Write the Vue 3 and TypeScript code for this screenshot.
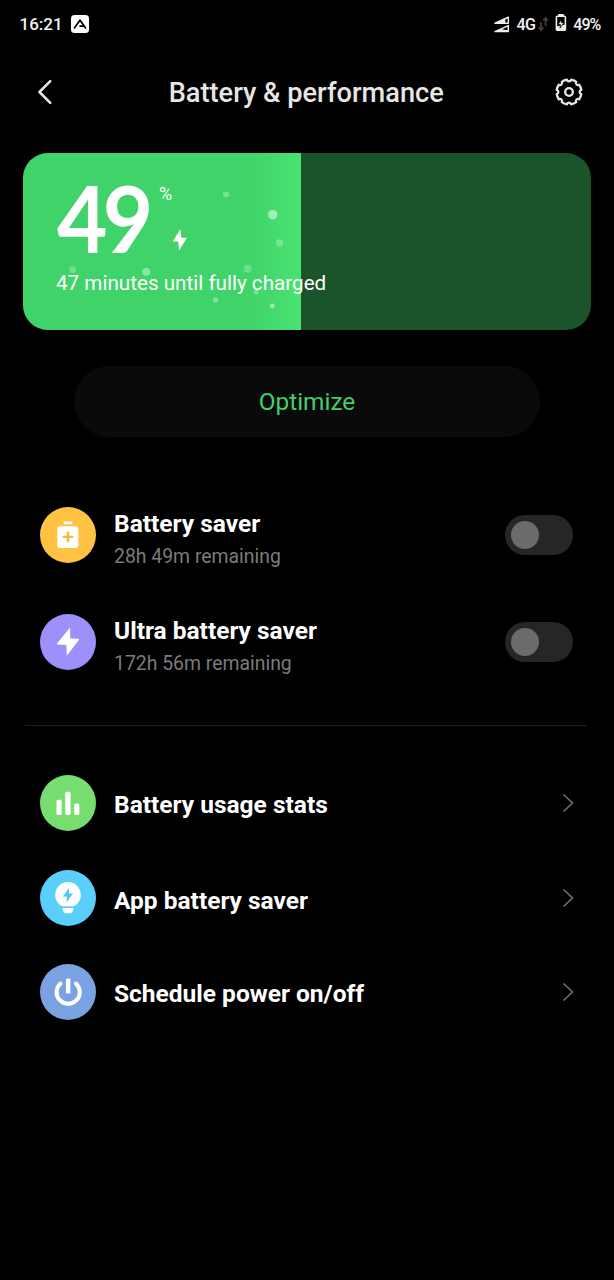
<script setup lang="ts">
interface SaverRow {
  id: 'saver' | 'ultra'
  title: string
  detail: string
}
interface LinkRow {
  id: 'stats' | 'app' | 'power'
  title: string
}

const level = 49

const savers: SaverRow[] = [
  { id: 'saver', title: 'Battery saver', detail: '28h 49m remaining' },
  { id: 'ultra', title: 'Ultra battery saver', detail: '172h 56m remaining' },
]

const links: LinkRow[] = [
  { id: 'stats', title: 'Battery usage stats' },
  { id: 'app', title: 'App battery saver' },
  { id: 'power', title: 'Schedule power on/off' },
]

// cx, cy, radius, opacity
const bubbles: [number, number, number, number][] = [
  [59.5, 45, 3, 0.25],
  [203, 41.5, 3, 0.3],
  [249.7, 61.7, 4.8, 0.5],
  [256.5, 90, 3.7, 0.28],
  [49.5, 116.5, 3.5, 0.25],
  [123.3, 118.7, 4, 0.38],
  [224.7, 115.7, 3.9, 0.25],
  [192.5, 147, 2.7, 0.35],
  [233, 139, 2.5, 0.3],
  [249.3, 153, 2.4, 0.5],
]

// Eight-lobed gear: outer arcs joined by small inward notches
function gearPath(): string {
  const R = 12.5
  const half = (9.5 * Math.PI) / 180
  const pt = (a: number) => `${(15 + R * Math.cos(a)).toFixed(2)} ${(15 + R * Math.sin(a)).toFixed(2)}`
  let d = ''
  for (let i = 0; i < 8; i++) {
    const a = (i * Math.PI) / 4
    d += i === 0 ? `M${pt(a - half)}` : `A${R} ${R} 0 0 1 ${pt(a - half)}`
    d += `A2.1 2.1 0 0 0 ${pt(a + half)}`
  }
  return d + `A${R} ${R} 0 0 1 ${pt(-half)}Z`
}
const gear = gearPath()
</script>

<template>
  <div class="screen">
    <div class="status">
      <span class="clock">16:21</span>
      <svg class="badge" width="18" height="18" viewBox="0 0 18 18">
        <rect width="18" height="18" rx="3.5" fill="#fff" />
        <path d="M3 13.6 9 5.2l6 8.4M8.4 11.200h4.600" fill="none" stroke="#000" stroke-width="1.700" />
      </svg>
      <span class="grow"></span>
      <svg class="signal" width="16" height="17" viewBox="0 0 16 17">
        <path d="M1 7.200 14.300 1.200v6zM1 15.600 14.300 9.600v6z" fill="none" stroke="#eee" stroke-width="1.500" stroke-linejoin="round" />
        <path d="M1 7.200 11.300 2.600v4.600zM1 15.600l6-2.700 7.300 1.600v1.100z" fill="#eee" />
      </svg>
      <span class="net">4G</span>
      <svg class="arrows" width="11" height="16" viewBox="0 0 11 16">
        <path d="M3 6v8M.6 11.300 3 14l2.400-2.700M7.600 10V2M5.200 4.700 7.600 2 10 4.700" fill="none" stroke="#3c3c3c" stroke-width="1.900" />
      </svg>
      <svg class="cell" width="12" height="18" viewBox="0 0 12 18">
        <rect x="3.200" width="5.600" height="2.500" fill="#eee" />
        <rect x="1.400" y="2.300" width="9" height="14" rx="1" fill="none" stroke="#eee" stroke-width="1.600" />
        <path d="M1.400 12.500 10.400 10.500v5.800h-9z" fill="#eee" />
        <path d="M6.800 5 3 10.400h2.500L5 14.200l4-5.500H6.400z" fill="#fff" stroke="#000" stroke-width=".8" />
      </svg>
      <span class="pct">49%</span>
    </div>

    <header class="header">
      <svg class="back" width="16" height="26" viewBox="0 0 16 26">
        <path d="M13.300 2.200 2.400 13l10.900 10.800" fill="none" stroke="#e6e6e6" stroke-width="2.500" stroke-linecap="round" stroke-linejoin="round" />
      </svg>
      <h1>Battery &amp; performance</h1>
      <svg class="gear" width="30" height="30" viewBox="0 0 30 30" fill="none" stroke="#e6e6e6">
        <path :d="gear" stroke-width="2.300" stroke-linejoin="round" />
        <circle cx="15" cy="15" r="3.800" stroke-width="2.300" />
      </svg>
    </header>

    <section class="card">
      <div class="fill" :style="{ width: level + '%' }"></div>
      <svg class="bubbles" width="278" height="177" viewBox="0 0 278 177">
        <circle v-for="(b, i) in bubbles" :key="i" :cx="b[0]" :cy="b[1]" :r="b[2]" :fill-opacity="b[3]" fill="#fff" />
      </svg>
      <div class="info">
        <div class="level">
          <span class="number">{{ level }}</span>
          <div class="unit">
            <span>%</span>
            <svg width="16" height="22" viewBox="0 0 16 22">
              <path d="M8.200.3.8 12.600h5.500L7 21.600l8-12.900H9.400z" fill="#fff" />
            </svg>
          </div>
        </div>
        <div class="eta">47 minutes until fully charged</div>
      </div>
    </section>

    <button class="optimize">Optimize</button>

    <div class="savers">
      <div v-for="row in savers" :key="row.id" class="row">
        <svg class="icon" width="56" height="56" viewBox="0 0 56 56">
          <template v-if="row.id === 'saver'">
            <circle cx="28" cy="28" r="28" fill="#ffc242" />
            <rect x="23.600" y="14.600" width="8.800" height="2.600" rx=".8" fill="#fff" />
            <rect x="17.300" y="19.300" width="21" height="21.700" rx="2.500" fill="#fff" />
            <path d="M28 24.500v10.800M22.600 29.900h10.800" stroke="#f9b83a" stroke-width="2.400" />
          </template>
          <template v-else>
            <circle cx="28" cy="28" r="28" fill="#9d90fb" />
            <path d="M29.300 14.500 17 29.400q-.8 1.100.5 1.200l8.900.5.300 9.600q.2 1 .9.100l11.200-14.900q.7-1-.5-1.100l-8-.3-.200-9.700q-.2-1-.8-.3z" fill="#fff" />
          </template>
        </svg>
        <div class="texts">
          <div class="title">{{ row.title }}</div>
          <div class="detail">{{ row.detail }}</div>
        </div>
        <span class="toggle"></span>
      </div>
    </div>

    <div class="divider"></div>

    <div class="links">
      <div v-for="row in links" :key="row.id" class="row" :class="row.id">
        <svg class="icon" width="56" height="56" viewBox="0 0 56 56">
          <template v-if="row.id === 'stats'">
            <circle cx="28" cy="28" r="28" fill="#77dd70" />
            <g fill="#fff">
              <rect x="16.500" y="24.700" width="5.200" height="15.300" rx="1.500" />
              <rect x="25.200" y="16.800" width="5.400" height="23.200" rx="1.500" />
              <rect x="34.200" y="28.500" width="5.200" height="11.500" rx="1.500" />
            </g>
          </template>
          <template v-else-if="row.id === 'app'">
            <circle cx="28" cy="28" r="28" fill="#5bcffc" />
            <path d="M28 12a13 13 0 0 0-8.600 22.500c1.300 1 2.600 1.800 3.600 1.800h10c1 0 2.300-.8 3.600-1.800A13 13 0 0 0 28 12z" fill="#fff" />
            <path d="M22.600 37.900h10.800c0 3-1.500 5.300-3.600 5.300h-3.600c-2.100 0-3.600-2.300-3.600-5.300z" fill="#fff" />
            <path d="M29 17.800 23 26.500h4l-.5 5.900 6.500-9h-4.200z" fill="#55c4ee" />
          </template>
          <template v-else>
            <circle cx="28" cy="28" r="28" fill="#7aa2e0" />
            <path d="M20.500 19.500a11.600 11.600 0 1 0 15.400 0" fill="none" stroke="#fff" stroke-width="4" stroke-linecap="round" />
            <rect x="26" y="14.600" width="4.400" height="15" rx="1.200" fill="#fff" />
          </template>
        </svg>
        <div class="title">{{ row.title }}</div>
        <svg class="chevron" width="14" height="22" viewBox="0 0 14 22">
          <path d="m2.500 2.500 9 8.500-9 8.500" fill="none" stroke="#747474" stroke-width="1.500" />
        </svg>
      </div>
    </div>
  </div>
</template>

<style>
body {
  background: #000;
}
</style>

<style scoped>
.screen {
  width: 614px;
  height: 1280px;
  box-sizing: border-box;
  overflow: hidden;
  display: flex;
  flex-direction: column;
  background: #000;
  color: #fff;
  font-family: Roboto, sans-serif;
}
.status {
  height: 48px;
  flex: none;
  display: flex;
  align-items: center;
  padding: 0 13.500px 0 19.500px;
  font-size: 17px;
  font-weight: 500;
  color: #f2f2f2;
}
.badge { margin-left: 8px; }
.grow { flex: 1; }
.signal { margin-right: 6px; }
.net, .pct {
  font-size: 16px;
  line-height: 20px;
  padding-top: 1px;
  letter-spacing: -0.6px;
}
.pct { letter-spacing: -0.900px; }
.arrows { margin: 0 6px 0 3px; }
.cell { margin-right: 6px; margin-top: -2px; }
.header {
  height: 88px;
  flex: none;
  display: flex;
  align-items: center;
  justify-content: space-between;
  padding: 0 30px 0 36.500px;
}
.gear { position: relative; }
h1 {
  margin: 0;
  padding: 2px 0 0 6px;
  font-size: 27.200px;
  font-weight: 500;
  color: #e6e6e6;
  line-height: 36px;
}
.card {
  position: relative;
  flex: none;
  height: 177px;
  margin: 17px 23px 0;
  border-radius: 25px;
  overflow: hidden;
  background: #1b532a;
}
.fill {
  position: absolute;
  inset: 0 auto 0 0;
  background: linear-gradient(90deg, #40d369 82%, #4ae373);
}
.bubbles {
  position: absolute;
  left: 0;
  top: 0;
}
.info {
  position: relative;
  padding: 20px 0 0 33px;
}
.level {
  display: flex;
  height: 90px;
}
.number {
  width: 103px;
  padding-left: 1px;
  box-sizing: border-box;
  font-family: Lato, sans-serif;
  font-weight: 700;
  font-size: 92.500px;
  line-height: 90px;
  letter-spacing: -5px;
  transform: scaleX(0.94);
  transform-origin: left;
}
.unit {
  display: flex;
  flex-direction: column;
  gap: 25px;
  padding: 11px 0 0;
}
.unit span {
  font-size: 18px;
  line-height: 20px;
}
.unit svg { margin-left: 13px; }
.eta {
  margin-top: 7px;
  font-size: 20.650px;
  line-height: 26px;
}
.optimize {
  flex: none;
  width: 466px;
  height: 71px;
  margin: 36px auto 0;
  padding: 1px 0 0;
  border: 0;
  border-radius: 36px;
  background: #0a0a0a;
  color: #42cf69;
  font: 400 24.400px/70px Roboto, sans-serif;
}
.savers {
  margin-top: 70px;
  display: flex;
  flex-direction: column;
  gap: 50.500px;
}
.row {
  display: flex;
  align-items: center;
  padding: 0 41px 0 40px;
  height: 56px;
}
.icon { margin-right: 18px; flex: none; }
.title {
  font-size: 24.500px;
  font-weight: 700;
  line-height: 32px;
}
.detail {
  font-size: 19.400px;
  line-height: 24px;
  color: #7b7b7b;
  margin-top: 5px;
}
.texts { margin-top: 7px; }
.toggle {
  margin-left: auto;
  width: 68px;
  height: 40px;
  border-radius: 20px;
  background: #262626;
  display: flex;
  align-items: center;
}
.toggle::before {
  content: '';
  width: 28px;
  height: 28px;
  margin-left: 6px;
  border-radius: 50%;
  background: #6b6b6b;
}
.divider {
  flex: none;
  height: 1px;
  margin: 55px 27px 0 25px;
  background: #1f1f1f;
}
.links {
  margin-top: 49.500px;
  display: flex;
  flex-direction: column;
  gap: 38.500px;
}
.links .title { padding-top: 4px; }
.links .app .title { padding-top: 7px; }
.chevron { margin-left: auto; margin-right: -2px; }
</style>
